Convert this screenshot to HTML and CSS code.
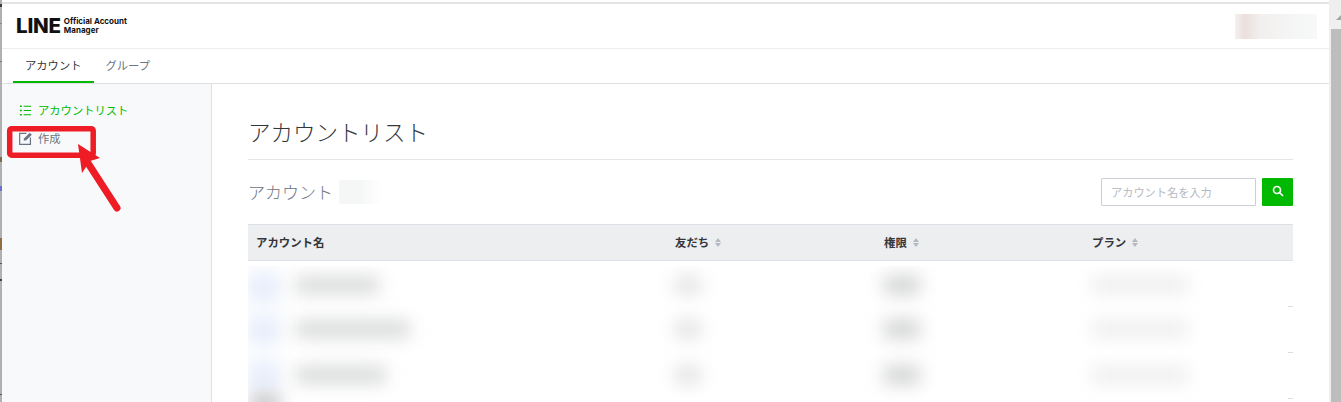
FILE: index.html
```html
<!DOCTYPE html>
<html lang="ja">
<head>
  <meta charset="UTF-8" />
  <title>LINE Official Account Manager</title>
  <link rel="stylesheet" href="styles.css">
</head>

<body>
  <div class="edge"></div>

  <div class="page">
    <div class="topline"></div>

    <header class="header">
      <div class="logo">
        <span class="logo-line">LINE</span>
        <span class="logo-sub">Official Account<br>Manager</span>
      </div>
      <div class="user"></div>
    </header>

    <nav class="tabs">
      <a class="tab active">アカウント</a>
      <a class="tab">グループ</a>
    </nav>

    <div class="layout">
      <aside class="sidebar">
        <a class="side-item active">
          <svg class="side-icon" viewBox="0 0 14 14" fill="none" stroke="currentColor">
            <path d="M5 2.500h8M5 7h8M5 11.500h8" stroke-width="1.100"/>
            <path d="M1 2.500h2M1 7h2M1 11.500h2" stroke-width="1.600"/>
          </svg>
          アカウントリスト
        </a>
        <a class="side-item">
          <svg class="side-icon" viewBox="0 0 14 14" fill="none" stroke="#6b7480">
            <path d="M8 1.500H.7v11.800h11.600V6" stroke-width="1.300"/>
            <path d="M5 9.300l.6-2.600 6-6 2.200 2.200-6 6z" fill="#6b7480" stroke="none"/>
          </svg>
          作成
        </a>
      </aside>

      <main class="content">
        <h1 class="title">アカウントリスト</h1>

        <div class="section-head">
          <h2 class="subtitle">アカウント</h2>
          <div class="count"></div>
          <form class="search">
            <input type="text" placeholder="アカウント名を入力">
            <button type="button" aria-label="検索">
              <svg viewBox="0 0 12 12" fill="none" stroke="#fff" stroke-width="1.700">
                <circle cx="5" cy="5" r="3.500"/>
                <path d="M7.500 7.500l3.500 3.500"/>
              </svg>
            </button>
          </form>
        </div>

        <div class="thead">
          <div class="th">アカウント名</div>
          <div class="th">友だち <i class="sort"></i></div>
          <div class="th">権限 <i class="sort"></i></div>
          <div class="th">プラン <i class="sort"></i></div>
        </div>

        <div class="rows">
          <div class="row">
            <div class="td"><b class="blur b-icon"></b><b class="blur b-name w83"></b></div>
            <div class="td"><b class="blur b-friends"></b></div>
            <div class="td"><b class="blur b-perm"></b></div>
            <div class="td"><b class="blur b-plan"></b></div>
          </div>
          <div class="row">
            <div class="td"><b class="blur b-icon"></b><b class="blur b-name w114"></b></div>
            <div class="td"><b class="blur b-friends"></b></div>
            <div class="td"><b class="blur b-perm"></b></div>
            <div class="td"><b class="blur b-plan"></b></div>
          </div>
          <div class="row">
            <div class="td"><b class="blur b-icon"></b><b class="blur b-name w90"></b></div>
            <div class="td"><b class="blur b-friends"></b></div>
            <div class="td"><b class="blur b-perm"></b></div>
            <div class="td"><b class="blur b-plan"></b></div>
          </div>
          <div class="row">
            <div class="td"><b class="blur b-last"></b></div>
          </div>
        </div>
      </main>
    </div>
  </div>

  <div class="scrollbar">
    <div class="scroll-up"></div>
    <div class="scroll-thumb"></div>
  </div>

  <!-- red annotation on top of the screenshot -->
  <svg class="annotation" viewBox="0 0 1341 402">
    <rect x="9.700" y="128.700" width="83.500" height="26.500" rx="2" fill="none" stroke="#ee1c25" stroke-width="5.500"/>
    <path d="M78 144L100 158 90 161 82 173z" fill="#ee1c25"/>
    <path d="M86 160L117 208" stroke="#ee1c25" stroke-width="7" stroke-linecap="round"/>
  </svg>
</body>
</html>
```

FILE: styles.css
```css
:root {
  --green: #00b900;
  --line: #e3e5e8;
  --text: #33363b;
  --muted: #6b7480;
}

* {
  box-sizing: border-box;
}

body {
  margin: 0;
  height: 402px;
  overflow: hidden;
  display: flex;
  position: relative;
  background: #fff;
  color: var(--text);
  font-family: "Noto Sans CJK JP", "Noto Sans", sans-serif;
}

/* Window edges: scraps of the window behind show in the strip */
.edge {
  width: 2px;
  flex: none;
  background:
    linear-gradient(#3c3c3c, #3c3c3c) 0 4px / 2px 3px no-repeat,
    linear-gradient(#8a8a8a, #8a8a8a) 0 23px / 2px 1px no-repeat,
    linear-gradient(#7a7a7a, #7a7a7a) 0 61px / 2px 1px no-repeat,
    linear-gradient(#7d6a55, #7d6a55) 0 157px / 2px 5px no-repeat,
    linear-gradient(#6f6fd0, #6f6fd0) 0 186px / 2px 5px no-repeat,
    linear-gradient(#8f6f3f, #8f6f3f) 0 238px / 2px 12px no-repeat,
    linear-gradient(#555, #555) 0 263px / 2px 1px no-repeat,
    linear-gradient(#444, #444) 0 279px / 2px 2px no-repeat,
    linear-gradient(#555, #555) 0 394px / 2px 1px no-repeat,
    #b0b0b0;
}

.page {
  flex: 1;
  min-width: 0;
  display: flex;
  flex-direction: column;
}

.topline {
  height: 2px;
  margin-top: 2px;
  background: #e4e4e4;
  flex: none;
}

.scrollbar {
  width: 12px;
  flex: none;
  background: #efefef;
  padding: 4px 0 0 2px;
  display: flex;
  flex-direction: column;
}

.scroll-up {
  height: 25px;
  flex: none;
  position: relative;
}

.scroll-up::after {
  content: "";
  position: absolute;
  right: 0;
  top: 11px;
  border-left: 5px solid transparent;
  border-bottom: 5px solid #a6a6a6;
}

.scroll-thumb {
  flex: 1;
  background: #bdbdbd;
}

/* Header */
.header {
  height: 45px;
  flex: none;
  display: flex;
  justify-content: space-between;
  align-items: center;
  padding: 0 12px 0 14px;
  border-bottom: 1px solid #eceef0;
}

.logo {
  display: flex;
  align-items: center;
  gap: 3px;
  color: #111;
}

.logo-line {
  font-family: Inter, sans-serif;
  font-weight: 800;
  font-size: 20.500px;
  line-height: 1;
  letter-spacing: -0.2px;
}

.logo-sub {
  font-family: Inter, sans-serif;
  font-weight: 700;
  font-size: 8px;
  line-height: 9px;
}

.user {
  width: 82px;
  height: 25px;
  background: linear-gradient(90deg, #f4f0ef 0, #ebdfdc 12%, #f2f0ef 32%, #f4f5f5 70%, #f7f8f8 100%);
}

/* Tabs */
.tabs {
  height: 35px;
  flex: none;
  display: flex;
  padding-left: 11px;
  border-bottom: 1px solid #dfe1e4;
}

.tab {
  padding: 0 12px;
  height: 34px;
  font-size: 11.300px;
  line-height: 33px;
  color: var(--muted);
}

.tab.active {
  color: var(--text);
  border-bottom: 2px solid var(--green);
}

/* Sidebar */
.layout {
  flex: 1;
  min-height: 0;
  display: flex;
}

.sidebar {
  width: 210px;
  flex: none;
  padding-top: 15px;
  background: #f7f9fb;
  border-right: 1px solid #dfe1e4;
}

.side-item {
  display: flex;
  align-items: center;
  gap: 6px;
  height: 22px;
  margin-bottom: 6px;
  padding-left: 17px;
  font-size: 11.300px;
  color: var(--muted);
}

.side-item.active {
  color: var(--green);
}

.side-icon {
  width: 13px;
  height: 13px;
  flex: none;
}

/* Content */
.content {
  flex: 1;
  min-width: 0;
  padding: 0 36px;
}

.title {
  margin: 0;
  height: 76px;
  padding-top: 27px;
  font-size: 22.500px;
  line-height: 40px;
  font-weight: 300;
  border-bottom: 1px solid var(--line);
}

.section-head {
  display: flex;
  align-items: center;
  height: 64px;
}

.subtitle {
  margin: -2px 0 0;
  font-size: 17px;
  font-weight: 300;
  color: var(--muted);
}

.count {
  width: 42px;
  height: 24px;
  margin-left: 6px;
  background: linear-gradient(90deg, #f5f6f6 50%, #fff);
}

.search {
  margin-left: auto;
  display: flex;
  gap: 6px;
}

.search input {
  width: 155px;
  height: 28px;
  padding: 0 9px 1px;
  border: 1px solid #ccd0d6;
  border-radius: 1px;
  font: inherit;
  font-size: 11.200px;
}

.search input::placeholder {
  color: #b4b9c1;
  opacity: 1;
}

.search button {
  width: 31px;
  height: 28px;
  padding: 0 0 2px;
  border: none;
  border-radius: 1px;
  background: var(--green);
  display: flex;
  align-items: center;
  justify-content: center;
}

.search svg {
  width: 12px;
  height: 12px;
}

/* Table */
.thead,
.row {
  display: grid;
  grid-template-columns: 419px 209px 208px 1fr;
}

.thead {
  height: 37px;
  align-items: center;
  background: #eceef0;
  border-top: 1px solid #dde0e6;
  border-bottom: 1px solid #dde0e6;
}

.th {
  padding: 0 0 2px 8px;
  font-size: 11.400px;
  font-weight: 700;
  display: flex;
  align-items: center;
  gap: 6px;
}

.sort {
  display: flex;
  flex-direction: column;
  gap: 1px;
  margin-top: 2px;
}

.sort::before,
.sort::after {
  content: "";
  border-left: 3.500px solid transparent;
  border-right: 3.500px solid transparent;
}

.sort::before {
  border-bottom: 4px solid #b4b9c1;
}

.sort::after {
  border-top: 4px solid #b4b9c1;
}

.rows {
  height: 136px;
  margin-top: 5px;
  overflow: hidden;
}

.row {
  height: 46px;
  align-items: center;
  position: relative;
}

.row:first-child {
  height: 41px;
}

.row:last-child {
  height: 3px;
  align-items: start;
}

/* only the end of each row line survived the blur */
.row::after {
  content: "";
  position: absolute;
  right: 0;
  bottom: 0;
  width: 5px;
  height: 1px;
  background: #dcdcdc;
}

.row:last-child::after {
  display: none;
}

.td {
  display: flex;
  align-items: center;
  padding-left: 8px;
}

.blur {
  display: block;
  filter: blur(9px);
}

.b-icon {
  width: 32px;
  height: 30px;
  margin: 0 16px 0 -8px;
  background: #e6edfb;
}

.b-name {
  height: 16px;
  margin-top: -3px;
  background: #d4d6d5;
}

.w83 { width: 83px; }
.w114 { width: 114px; }
.w90 { width: 90px; }

.b-friends {
  width: 26px;
  height: 16px;
  margin-top: -3px;
  background: #dfdfdf;
}

.b-perm {
  width: 36px;
  height: 18px;
  margin-top: -3px;
  background: #d0d1d1;
}

.b-plan {
  width: 96px;
  height: 14px;
  margin-top: -3px;
  background: #eaeaea;
}

.b-last {
  width: 30px;
  height: 14px;
  margin: -3px 0 0 -6px;
  background: #b5b5b5;
}

/* Annotation */
.annotation {
  position: absolute;
  left: 0;
  top: 0;
  width: 1341px;
  height: 402px;
  pointer-events: none;
}
```
